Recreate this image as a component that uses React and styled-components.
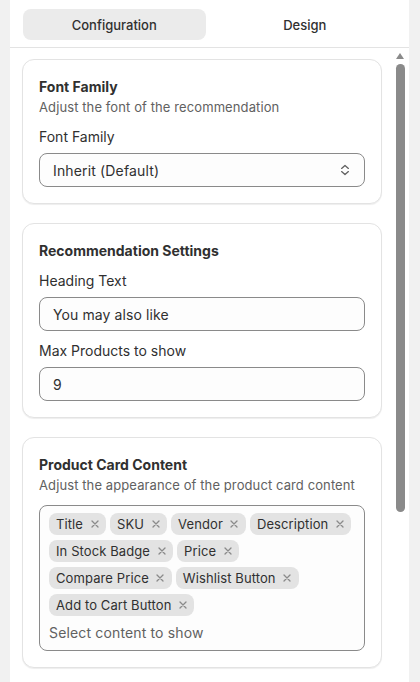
import React, { useState } from 'react';
import styled, { createGlobalStyle } from 'styled-components';

const GlobalStyle = createGlobalStyle`
  html, body {
    margin: 0;
    height: 100%;
  }
  body {
    background: #f1f1f1;
    font-family: Inter, 'Noto Sans', sans-serif;
    color: #303030;
    -webkit-font-smoothing: antialiased;
  }
  #root {
    height: 100%;
  }
`;

const Page = styled.div`
  height: 100%;
  padding: 0 11px 0 10px;
  box-sizing: border-box;
`;

const Panel = styled.div`
  height: 100%;
  background: #fff;
  display: flex;
  flex-direction: column;
`;

const TabBar = styled.div`
  display: flex;
  gap: 8px;
  padding: 9px 13px 7px;
  border-bottom: 1px solid #e3e3e3;
  flex-shrink: 0;
`;

const Tab = styled.button`
  flex: 1;
  height: 31px;
  border: none;
  border-radius: 8px;
  background: ${(p) => (p.$active ? '#ebebeb' : 'transparent')};
  color: #303030;
  font-family: inherit;
  font-size: 13px;
  font-weight: 500;
  cursor: pointer;
`;

const Body = styled.div`
  flex: 1;
  min-height: 0;
  display: flex;
`;

const Scroller = styled.div`
  flex: 1;
  overflow-y: auto;
  scrollbar-width: none;
  padding: 11px 12px 14px;
  display: flex;
  flex-direction: column;
  gap: 19px;
`;

/* scrollbar drawn by hand: the headless browser hides native ones */
const Rail = styled.div`
  width: 15px;
  flex-shrink: 0;
  padding: 5px 4px 0 2px;
  box-sizing: border-box;
  display: flex;
  flex-direction: column;
  gap: 5px;
`;

const RailArrow = styled.div`
  width: 0;
  height: 0;
  border-left: 4.5px solid transparent;
  border-right: 4.5px solid transparent;
  border-bottom: 6.5px solid #8a8a8a;
`;

const Thumb = styled.div`
  width: 9px;
  height: 448px;
  border-radius: 5px;
  background: #8a8a8a;
`;

const Card = styled.section`
  flex-shrink: 0;
  background: #fff;
  border: 1px solid #e3e3e3;
  border-radius: 12px;
  box-shadow: 0 1px 1px rgba(0, 0, 0, 0.07);
  padding: 17px 16px 16px;
  display: flex;
  flex-direction: column;
  gap: 10px;
`;

const CardHeader = styled.div`
  display: flex;
  flex-direction: column;
`;

const CardTitle = styled.h3`
  margin: 0;
  font-size: 14px;
  line-height: 20px;
  font-weight: 650;
  color: #303030;
`;

const CardSubtitle = styled.p`
  margin: 0;
  font-size: 13px;
  line-height: 20px;
  letter-spacing: 0.1px;
  color: #616161;
`;

const Field = styled.label`
  display: flex;
  flex-direction: column;
  gap: 6px;
`;

const Label = styled.span`
  font-size: 14px;
  line-height: 20px;
  color: #303030;
`;

const Control = styled.div`
  display: flex;
  align-items: center;
  height: 34px;
  box-sizing: border-box;
  border: 1px solid #8a8a8a;
  border-radius: 8px;
  background: #fdfdfd;
`;

const TextInput = styled.input`
  flex: 1;
  min-width: 0;
  height: 100%;
  border: none;
  background: transparent;
  padding: 0 13px;
  font-family: inherit;
  font-size: 14px;
  letter-spacing: 0.1px;
  color: #303030;
  outline: none;
`;

const SelectValue = styled.span`
  flex: 1;
  padding: 0 13px;
  font-size: 14px;
  letter-spacing: 0.15px;
  color: #303030;
`;

const SelectIcon = styled.svg`
  width: 16px;
  height: 16px;
  margin-right: 11px;
  color: #616161;
`;

const TagBox = styled.div`
  border: 1px solid #8a8a8a;
  border-radius: 8px;
  background: #fdfdfd;
  padding: 7px 9px 7px;
  display: flex;
  flex-direction: column;
  gap: 7px;
`;

const TagList = styled.div`
  display: flex;
  flex-wrap: wrap;
  gap: 5px 4px;
`;

const Tag = styled.span`
  display: inline-flex;
  align-items: center;
  gap: 7px;
  height: 22px;
  padding: 0 7px 0 7px;
  border-radius: 8px;
  background: #e3e3e3;
  font-size: 13px;
  letter-spacing: 0.1px;
  color: #303030;
`;

const RemoveButton = styled.button`
  display: inline-flex;
  align-items: center;
  justify-content: center;
  width: 9px;
  height: 12px;
  padding: 0;
  border: none;
  background: none;
  color: #8a8a8a;
  cursor: pointer;
`;

const Placeholder = styled.span`
  font-size: 14px;
  line-height: 20px;
  letter-spacing: 0.15px;
  color: #616161;
`;

const UpDownIcon = () => (
  <SelectIcon viewBox="0 0 16 16" fill="none" stroke="currentColor" strokeWidth="1.3" strokeLinecap="round" strokeLinejoin="round">
    <path d="M4.6 6.4 8 3.4l3.4 3" />
    <path d="M4.6 9.6 8 12.6l3.4-3" />
  </SelectIcon>
);

const CloseIcon = () => (
  <svg width="8" height="8" viewBox="0 0 8 8" fill="none" stroke="currentColor" strokeWidth="1.3" strokeLinecap="round">
    <path d="M1 1l6 6M7 1 1 7" />
  </svg>
);

const initialTags = [
  'Title',
  'SKU',
  'Vendor',
  'Description',
  'In Stock Badge',
  'Price',
  'Compare Price',
  'Wishlist Button',
  'Add to Cart Button',
];

const App = () => {
  const [tab, setTab] = useState('config');
  const [heading, setHeading] = useState('You may also like');
  const [maxProducts, setMaxProducts] = useState('9');
  const [tags, setTags] = useState(initialTags);

  return (
    <>
      <GlobalStyle />
      <Page>
        <Panel>
          <TabBar>
            <Tab $active={tab === 'config'} onClick={() => setTab('config')}>Configuration</Tab>
            <Tab $active={tab === 'design'} onClick={() => setTab('design')}>Design</Tab>
          </TabBar>
          <Body>
            <Scroller>
              <Card>
                <CardHeader>
                  <CardTitle>Font Family</CardTitle>
                  <CardSubtitle>Adjust the font of the recommendation</CardSubtitle>
                </CardHeader>
                <Field>
                  <Label>Font Family</Label>
                  <Control>
                    <SelectValue>Inherit (Default)</SelectValue>
                    <UpDownIcon />
                  </Control>
                </Field>
              </Card>

              <Card>
                <CardHeader>
                  <CardTitle>Recommendation Settings</CardTitle>
                </CardHeader>
                <Field>
                  <Label>Heading Text</Label>
                  <Control>
                    <TextInput value={heading} onChange={(e) => setHeading(e.target.value)} />
                  </Control>
                </Field>
                <Field>
                  <Label>Max Products to show</Label>
                  <Control>
                    <TextInput value={maxProducts} onChange={(e) => setMaxProducts(e.target.value)} />
                  </Control>
                </Field>
              </Card>

              <Card>
                <CardHeader>
                  <CardTitle>Product Card Content</CardTitle>
                  <CardSubtitle>Adjust the appearance of the product card content</CardSubtitle>
                </CardHeader>
                <TagBox>
                  <TagList>
                    {tags.map((t) => (
                      <Tag key={t}>
                        {t}
                        <RemoveButton onClick={() => setTags(tags.filter((x) => x !== t))}>
                          <CloseIcon />
                        </RemoveButton>
                      </Tag>
                    ))}
                  </TagList>
                  <Placeholder>Select content to show</Placeholder>
                </TagBox>
              </Card>
            </Scroller>
            <Rail>
              <RailArrow />
              <Thumb />
            </Rail>
          </Body>
        </Panel>
      </Page>
    </>
  );
};

export default App;
